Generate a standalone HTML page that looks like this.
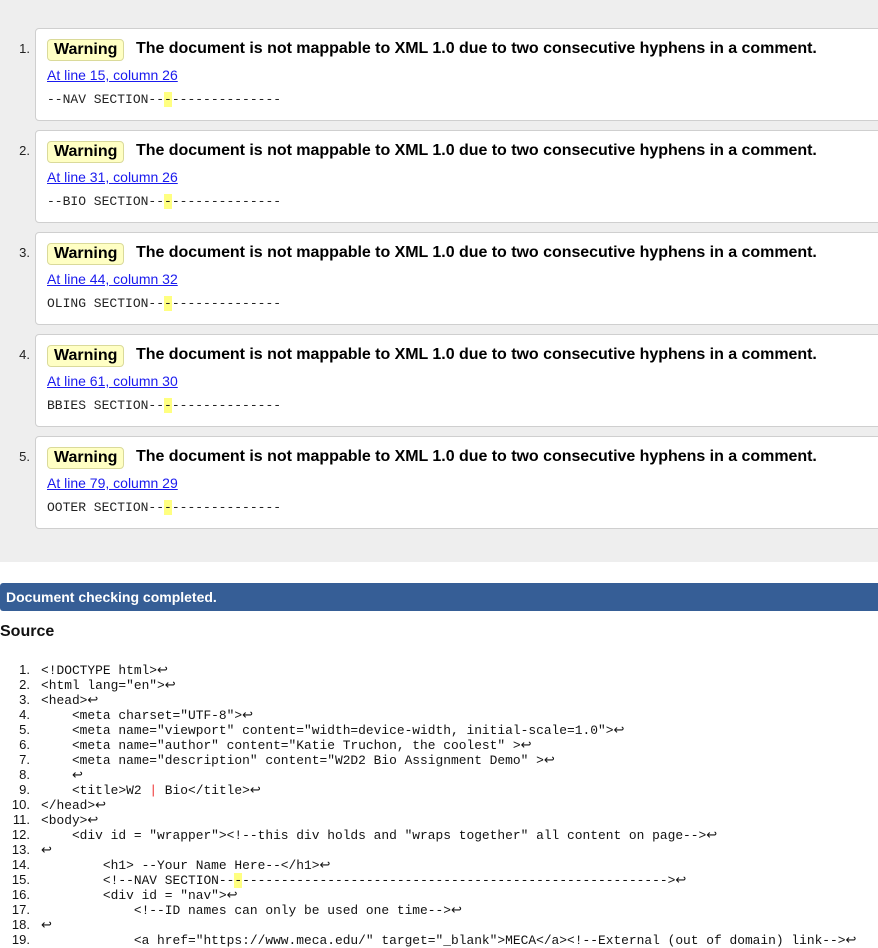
<!DOCTYPE html>
<html><head><meta charset="utf-8"><style>
body{margin:0;width:878px;height:947px;overflow:hidden;background:#fff;font-family:"Liberation Sans",Arial,sans-serif;position:relative}
.gray{position:absolute;left:0;top:0;width:878px;height:562px;background:#eeeeee}
.box{position:absolute;left:35px;width:860px;height:91px;background:#fff;border:1px solid #cfcfcf;border-radius:4px}
.num{position:absolute;left:0;width:30px;text-align:right;font-size:13px;color:#222}
.badge{position:absolute;left:11px;top:10px;height:20px;line-height:20px;padding:0 6px;background:#ffffc4;border:1px solid #dada9a;border-radius:4px;font-weight:bold;font-size:16px;color:#000}
.msg{position:absolute;left:100px;top:10px;line-height:20px;font-weight:bold;font-size:16px;color:#000;white-space:nowrap;letter-spacing:-0.03px}
.lnk{position:absolute;left:11px;top:38px;font-size:14px;color:#1a1aee;text-decoration:underline;line-height:16px}
.ext{position:absolute;left:11px;top:63px;font-family:"Liberation Mono",monospace;font-size:13px;line-height:16px;white-space:pre;color:#222}
.hl{background:#ffff80}
.bar{position:absolute;left:0;top:583px;width:878px;height:28px;background:#365e96;color:#fff;font-weight:bold;font-size:14px;line-height:28px;padding-left:6px;box-sizing:border-box;border-radius:3px 0 0 3px}
h2{position:absolute;left:0;top:622px;margin:0;font-size:16px;font-weight:bold;color:#111;line-height:20px}
.src{position:absolute;left:0;top:662px;font-size:13px;line-height:15px;color:#111}
.src div{height:15px;white-space:nowrap}
.src .n{display:inline-block;width:30px;text-align:right;font-family:"Liberation Sans",sans-serif;margin-right:11px}
.src .c{font-family:"Liberation Mono",monospace;font-size:12.9px;white-space:pre}
.r{color:#e33}
</style></head><body>
<div class="gray"></div>

<div class="num" style="top:41px">1.</div>
<div class="box" style="top:28px"><div class="badge">Warning</div><div class="msg">The document is not mappable to XML 1.0 due to two consecutive hyphens in a comment.</div><div class="lnk">At line 15, column 26</div><div class="ext">--NAV SECTION--<span class="hl">-</span>--------------</div></div>

<div class="num" style="top:143px">2.</div>
<div class="box" style="top:130px"><div class="badge">Warning</div><div class="msg">The document is not mappable to XML 1.0 due to two consecutive hyphens in a comment.</div><div class="lnk">At line 31, column 26</div><div class="ext">--BIO SECTION--<span class="hl">-</span>--------------</div></div>

<div class="num" style="top:245px">3.</div>
<div class="box" style="top:232px"><div class="badge">Warning</div><div class="msg">The document is not mappable to XML 1.0 due to two consecutive hyphens in a comment.</div><div class="lnk">At line 44, column 32</div><div class="ext">OLING SECTION--<span class="hl">-</span>--------------</div></div>

<div class="num" style="top:347px">4.</div>
<div class="box" style="top:334px"><div class="badge">Warning</div><div class="msg">The document is not mappable to XML 1.0 due to two consecutive hyphens in a comment.</div><div class="lnk">At line 61, column 30</div><div class="ext">BBIES SECTION--<span class="hl">-</span>--------------</div></div>

<div class="num" style="top:449px">5.</div>
<div class="box" style="top:436px"><div class="badge">Warning</div><div class="msg">The document is not mappable to XML 1.0 due to two consecutive hyphens in a comment.</div><div class="lnk">At line 79, column 29</div><div class="ext">OOTER SECTION--<span class="hl">-</span>--------------</div></div>

<div class="bar">Document checking completed.</div>
<h2>Source</h2>
<div class="src"><div><span class="n">1.</span><span class="c">&lt;!DOCTYPE html&gt;↩</span></div><div><span class="n">2.</span><span class="c">&lt;html lang="en"&gt;↩</span></div><div><span class="n">3.</span><span class="c">&lt;head&gt;↩</span></div><div><span class="n">4.</span><span class="c">    &lt;meta charset="UTF-8"&gt;↩</span></div><div><span class="n">5.</span><span class="c">    &lt;meta name="viewport" content="width=device-width, initial-scale=1.0"&gt;↩</span></div><div><span class="n">6.</span><span class="c">    &lt;meta name="author" content="Katie Truchon, the coolest" &gt;↩</span></div><div><span class="n">7.</span><span class="c">    &lt;meta name="description" content="W2D2 Bio Assignment Demo" &gt;↩</span></div><div><span class="n">8.</span><span class="c">    ↩</span></div><div><span class="n">9.</span><span class="c">    &lt;title&gt;W2 <span class="r">|</span> Bio&lt;/title&gt;↩</span></div><div><span class="n">10.</span><span class="c">&lt;/head&gt;↩</span></div><div><span class="n">11.</span><span class="c">&lt;body&gt;↩</span></div><div><span class="n">12.</span><span class="c">    &lt;div id = "wrapper"&gt;&lt;!--this div holds and "wraps together" all content on page--&gt;↩</span></div><div><span class="n">13.</span><span class="c">↩</span></div><div><span class="n">14.</span><span class="c">        &lt;h1&gt; --Your Name Here--&lt;/h1&gt;↩</span></div><div><span class="n">15.</span><span class="c">        &lt;!--NAV SECTION--<span class="hl">-</span>-------------------------------------------------------&gt;↩</span></div><div><span class="n">16.</span><span class="c">        &lt;div id = "nav"&gt;↩</span></div><div><span class="n">17.</span><span class="c">            &lt;!--ID names can only be used one time--&gt;↩</span></div><div><span class="n">18.</span><span class="c">↩</span></div><div><span class="n">19.</span><span class="c">            &lt;a href="https://www.meca.edu/" target="_blank"&gt;MECA&lt;/a&gt;&lt;!--External (out of domain) link--&gt;↩</span></div></div>
</body></html>
